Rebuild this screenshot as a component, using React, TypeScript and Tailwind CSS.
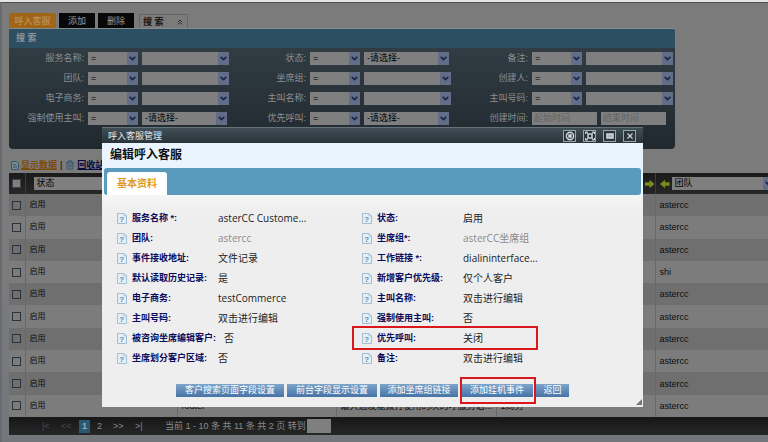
import React from 'react';
import { ChevronDown, ChevronsUp, Trash2 } from 'lucide-react';

interface SelectProps {
  label: string;
  value?: string;
  className?: string;
}

const Select: React.FC<SelectProps> = ({ label, value = '', className = '' }) => (
  <span className={`relative block h-[13px] shrink-0 bg-[#7f7f7f] ${className}`}>
    <select
      aria-label={label}
      className="block h-full w-full appearance-none pl-[3px] text-[9px] leading-[13px] text-black"
    >
      <option>{value}</option>
    </select>
    <span className="pointer-events-none absolute inset-y-0 right-0 flex w-[11px] items-center justify-center bg-[#636d88]">
      <ChevronDown className="h-[9px] w-[9px] text-[#1c2850]" strokeWidth={5} />
    </span>
  </span>
);

const filters = [
  { label: '服务名称' },
  { label: '状态', value: '-请选择-' },
  { label: '备注' },
  { label: '团队' },
  { label: '坐席组' },
  { label: '创建人' },
  { label: '电子商务' },
  { label: '主叫名称' },
  { label: '主叫号码' },
  { label: '强制使用主叫', value: '-请选择-' },
  { label: '优先呼叫', value: '-请选择-' },
];

const teams = [
  'astercc',
  'astercc',
  'astercc',
  'shi',
  'astercc',
  'astercc',
  'astercc',
  'astercc',
  'astercc',
  'astercc',
];

const fields = [
  { label: '服务名称 *:', value: 'asterCC Custome...' },
  { label: '状态:', value: '启用' },
  { label: '团队:', value: 'astercc', muted: true },
  { label: '坐席组*:', value: 'asterCC坐席组', muted: true },
  { label: '事件接收地址:', value: '文件记录' },
  { label: '工作链接 *:', value: 'dialininterface...' },
  { label: '默认读取历史记录:', value: '是' },
  { label: '新增客户优先级:', value: '仅个人客户' },
  { label: '电子商务:', value: 'testCommerce' },
  { label: '主叫名称:', value: '双击进行编辑' },
  { label: '主叫号码:', value: '双击进行编辑' },
  { label: '强制使用主叫:', value: '否' },
  { label: '被咨询坐席编辑客户:', value: '否' },
  { label: '优先呼叫:', value: '关闭', marked: true },
  { label: '坐席划分客户区域:', value: '否' },
  { label: '备注:', value: '双击进行编辑' },
];

const actions = [
  { label: '客户搜索页面字段设置', width: 'w-[108px]' },
  { label: '前台字段显示设置', width: 'w-[90px]' },
  { label: '添加坐席组链接', width: 'w-[78px]' },
  { label: '添加挂机事件', width: 'w-[72px]', marked: true },
  { label: '返回', width: 'w-[33px]' },
];

const HelpIcon = () => (
  <svg viewBox="0 0 10 11" className="h-[11px] w-[10px] shrink-0" aria-hidden="true">
    <path d="M.5.5h6.5l2.5 2.5v7.5h-9z" fill="#e3f0f7" stroke="#a3bfcf" />
    <path d="M7 .5v2.5h2.5" fill="#c5dce9" stroke="#a3bfcf" strokeWidth=".7" />
    <text x="4.8" y="8.5" textAnchor="middle" fontSize="8" fontWeight="bold" fill="#5b8dab">
      ?
    </text>
  </svg>
);

const MoveLeftIcon = () => (
  <svg viewBox="0 0 10 10" className="h-[10px] w-[10px] shrink-0" fill="#748f1e" aria-hidden="true">
    <path d="M0 5 5 .8v2.4h4.5v3.6H5v2.4z" />
  </svg>
);

const MoveRightIcon = () => (
  <svg viewBox="0 0 10 10" className="ml-auto h-[10px] w-[10px]" fill="#748f1e" aria-hidden="true">
    <path d="M9.5 5 4.5.8v2.4H0v3.6h4.5v2.4z" />
  </svg>
);

const WindowButton: React.FC<{ label: string; children: React.ReactNode }> = ({ label, children }) => (
  <button
    aria-label={label}
    className="flex h-3 w-[13px] items-center justify-center border border-[#98a3aa] bg-[#2b353b]"
  >
    <svg viewBox="0 0 10 10" className="h-[10px] w-[10px]" fill="none" stroke="#d5dade">
      {children}
    </svg>
  </button>
);

const SearchPanel = () => (
  <section className="mr-[93px] rounded-b-[4px] rounded-tr-[3px] bg-linear-to-b from-[#343f47] to-[#20292e] pb-6">
    <h2 className="h-[19px] rounded-tr-[3px] bg-[#2c4f62] pl-[7px] text-[9px] leading-[19px] font-bold text-[#8796a0]">
      搜 索
    </h2>
    <div className="grid grid-cols-3 gap-y-[7px] pt-1">
      {filters.map(({ label, value }) => (
        <div key={label} className="flex h-[13px] items-center">
          <span className="w-[75px] text-right text-[9px] leading-[13px] text-[#8b8f92]">{label}:</span>
          <Select label={`${label} 条件`} value="=" className="ml-1 w-[50px]" />
          <Select label={label} value={value} className={value ? 'ml-1 w-[85px]' : 'ml-1 w-[87px]'} />
        </div>
      ))}
      <div className="flex h-[13px] items-center">
        <span className="w-[75px] text-right text-[9px] leading-[13px] text-[#8b8f92]">创建时间:</span>
        <input
          aria-label="起始时间"
          placeholder="起始时间"
          className="ml-1 h-[13px] w-[65px] bg-[#7f7f7f] pl-[2px] text-[9px] placeholder:text-[#636363]"
        />
        <input
          aria-label="结束时间"
          placeholder="结束时间"
          className="ml-1 h-[13px] w-[65px] bg-[#7f7f7f] pl-[2px] text-[9px] placeholder:text-[#636363]"
        />
      </div>
    </div>
  </section>
);

const DataTable = () => (
  <table className="h-[244px] w-full table-fixed border-collapse text-left text-[9px] leading-[14px] text-[#0c0c0c]">
    <colgroup>
      <col className="w-4" />
      <col className="w-[152px]" />
      <col className="w-[159px]" />
      <col className="w-[160px]" />
      <col className="w-[159px]" />
      <col />
    </colgroup>
    <thead className="bg-linear-to-b from-[#1a1a1a] to-[#272727]">
      <tr className="h-[21px]">
        <th className="border-r border-[#3c3c3c] p-0">
          <input
            type="checkbox"
            aria-label="全选"
            className="mx-auto block h-[9px] w-[9px] appearance-none border border-[#3d4650] bg-[#7f7f7f]"
          />
        </th>
        <th className="border-r border-[#3c3c3c] p-0 pl-2 font-normal">
          <Select label="列一" value="状态" className="w-[120px]" />
        </th>
        <th className="border-r border-[#3c3c3c]" />
        <th className="border-r border-[#3c3c3c]" />
        <th className="border-r border-[#3c3c3c] p-0">
          <MoveRightIcon />
        </th>
        <th className="p-0 font-normal">
          <div className="flex items-center gap-[2px] pl-1">
            <MoveLeftIcon />
            <Select label="列五" value="团队" className="w-[102px]" />
          </div>
        </th>
      </tr>
    </thead>
    <tbody>
      {teams.map((team, i) => {
        const last = i === teams.length - 1;
        return (
          <tr key={i} className="odd:bg-[#6f6f6f] even:bg-[#7c7c7c]">
            <td className="border-r border-[#686868] p-0">
              <input
                type="checkbox"
                aria-label={`选择第 ${i + 1} 行`}
                className="mx-auto block h-[9px] w-[9px] appearance-none border border-[#2c3238]"
              />
            </td>
            <td className="truncate border-r border-[#686868] p-0 pl-1 text-[8px]">启用</td>
            <td className="truncate border-r border-[#686868] p-0 pl-1">{last && 'router'}</td>
            <td className="truncate border-r border-[#686868] p-0 pl-1">
              {last && '最大通发能拨打使用的次的呼服务话...'}
            </td>
            <td className="truncate border-r border-[#686868] p-0 pl-1">{last && '1商务'}</td>
            <td className="truncate p-0 pl-1">{team}</td>
          </tr>
        );
      })}
    </tbody>
  </table>
);

const Pager = () => (
  <footer className="flex h-[18px] items-center bg-linear-to-b from-[#171717] to-[#272727] pl-[33px] text-[9px] leading-3 text-[#8a8a8a]">
    <button className="w-[19px] text-left text-[#494949]">|&lt;</button>
    <button className="w-[18px] text-left text-[#494949]">&lt;&lt;</button>
    <button className="h-[13px] w-[11px] bg-[#2b5973] font-bold text-[#a0a8ac]">1</button>
    <button className="ml-[7px] w-4 text-left">2</button>
    <button className="w-[22px] text-left">&gt;&gt;</button>
    <button className="w-[30px] text-left">&gt;|</button>
    <label htmlFor="page" className="whitespace-nowrap">
      当前 1 - 10 条 共 11 条 共 2 页 转到
    </label>
    <input id="page" className="ml-px h-[14px] w-6 bg-[#7f7f7f]" />
  </footer>
);

const EditDialog = () => (
  <div className="absolute inset-x-0 top-0 flex pt-[125px] pr-[125px] pl-[102px]">
    <div role="dialog" aria-label="呼入客服管理" className="relative flex-1 bg-[#eeeeee]">
      <header className="flex h-4 items-center border-t border-[#64727a] bg-linear-to-b from-[#414f57] to-[#29343a] pr-[7px] pl-[6px]">
        <span className="flex-1 text-[9px] leading-[14px] text-[#e8ecee]">呼入客服管理</span>
        <div className="flex gap-[7px]">
          <WindowButton label="刷新">
            <path d="M3.5 1.5h3l2 2v3l-2 2h-3l-2-2v-3z" strokeWidth="1.3" />
            <rect x="3.8" y="3.8" width="2.4" height="2.4" fill="#d5dade" />
          </WindowButton>
          <WindowButton label="最大化">
            <rect x="3" y="3" width="4" height="4" strokeWidth="1.4" />
            <path d="M.5 3V1H3M7 1h2.5v2M9.5 7v2H7M3 9H.5V7M1 1l2 2M9 1 7 3M9 9 7 7M1 9l2-2" />
          </WindowButton>
          <WindowButton label="最小化">
            <rect x="2" y="3" width="6" height="4" fill="#a9b2b8" strokeWidth="1.5" />
          </WindowButton>
          <WindowButton label="关闭">
            <path d="m2.5 2.5 5 5M7.5 2.5l-5 5" strokeWidth="1.1" />
          </WindowButton>
        </div>
      </header>
      <h1 className="h-[25px] bg-[#e9f4fe] pl-2 text-[12px] leading-6 font-bold text-[#111111]">编辑呼入客服</h1>
      <div className="bg-linear-to-b from-[#e9f4fe] to-[#f5f8fa] px-[2px]">
        <div className="flex h-[27px] items-end rounded-[3px] bg-[#5a9abd] pl-[3px]">
          <button className="h-[23px] w-[60px] rounded-t-[3px] bg-white text-[10px] leading-[22px] font-bold text-[#e39a17]">
            基本资料
          </button>
        </div>
      </div>
      <dl className="grid grid-cols-2 bg-linear-to-b from-[#f6f6f6] to-[#eeeeee] to-10% pt-[13px] pr-9 pl-[15px]">
        {fields.map(({ label, value, muted, marked }) => (
          <div key={label} className="relative flex h-5 items-center whitespace-nowrap">
            <HelpIcon />
            <dt className="ml-[5px] min-w-[86px] pr-2 text-[9px] leading-5 font-bold text-[#0a0a5c]">{label}</dt>
            <dd
              className={`font-['Open_Sans','Noto_Sans_CJK_SC',sans-serif] text-[10px] leading-5 ${
                muted ? 'text-[#8a8a8a]' : 'text-[#222222]'
              }`}
            >
              {value}
            </dd>
            {marked && (
              <span className="absolute -top-[2px] right-[69px] -bottom-[2px] -left-[10px] border-2 border-[#d8181c]" />
            )}
          </div>
        ))}
      </dl>
      <div className="flex justify-center gap-[3px] pt-4 pb-[10px]">
        {actions.map(({ label, width, marked }) => (
          <button
            key={label}
            className={`relative h-[13px] bg-linear-to-b from-[#7ea4ca] to-[#4674a6] text-[9px] leading-[13px] whitespace-nowrap text-white ${width}`}
          >
            {label}
            {marked && (
              <span className="absolute -top-[7px] -right-[3px] -bottom-[7px] -left-px border-2 border-[#d8181c]" />
            )}
          </button>
        ))}
      </div>
      <svg viewBox="0 0 6 6" className="absolute right-[1px] bottom-[2px] h-[6px] w-[6px]" aria-hidden="true">
        <path d="M6 0v6H0z" fill="#777777" />
      </svg>
    </div>
  </div>
);

export default function App() {
  return (
    <div className="relative min-h-screen overflow-hidden border-t-2 border-[#e4e4e4] bg-linear-to-b from-[#7b7b7b] from-60% to-[#73767b] font-['Liberation_Sans','Noto_Sans_CJK_SC',sans-serif]">
      <div className="border-t border-l-2 border-t-[#4f4f4f] border-l-[#686b70] pb-[7px] pl-[7px]">
        <nav className="flex items-end gap-[3px] pt-[10px] text-[9px] leading-[14px]">
          <button className="h-[15px] w-[47px] rounded-t-[3px] bg-[#a06516] text-[#c09a66]">呼入客服</button>
          <button className="h-[15px] w-9 bg-[#080808] text-[#989898]">添加</button>
          <button className="h-[15px] w-9 bg-[#080808] text-[#989898]">删除</button>
          <button className="ml-[2px] flex h-[14px] w-[49px] items-center justify-between border border-b-0 border-[#666666] px-[3px] font-bold text-[#151515]">
            搜 索
            <ChevronsUp className="h-2 w-2 text-[#303030]" strokeWidth={3} />
          </button>
        </nav>
        <div className="mr-[93px] h-px bg-[#858b8f]" />
        <SearchPanel />
        <div className="flex h-6 items-center pt-2 pl-[2px] text-[9px] leading-4 font-bold">
          <svg viewBox="0 0 8 9" className="mr-[2px] h-[9px] w-2" aria-hidden="true">
            <path d="M.5.5h5l2 2v6h-7z" fill="#7e8a91" stroke="#34586b" />
            <path d="M2 3.5h3M2 5h4M2 6.5h4" stroke="#34586b" strokeWidth=".7" />
          </svg>
          <a href="#list" className="text-[#7d4a08] underline">
            显示数据
          </a>
          <span className="px-[3px] font-normal text-black">|</span>
          <Trash2 className="mr-[2px] h-[10px] w-[10px] text-[#3f6072]" strokeWidth={3} />
          <a href="#trash" className="text-[#090940] underline">
            回收站
          </a>
        </div>
        <DataTable />
        <Pager />
      </div>
      <EditDialog />
    </div>
  );
}
